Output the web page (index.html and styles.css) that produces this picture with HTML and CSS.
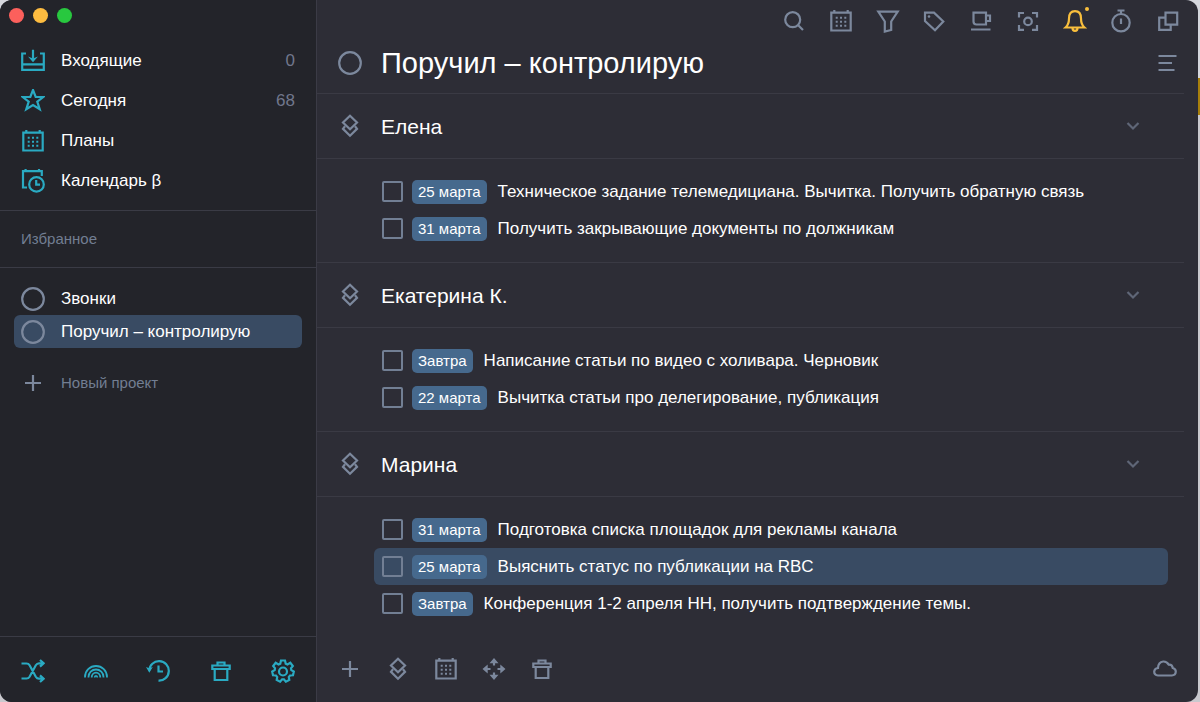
FILE: index.html
```html
<!DOCTYPE html>
<html lang="ru">
<head>
<meta charset="utf-8">
<meta name="viewport" content="width=device-width, initial-scale=1">
<title>Поручил – контролирую</title>
<link rel="stylesheet" href="styles.css">
</head>
<body>
<svg class="sprite" aria-hidden="true">
  <symbol id="inbox" viewBox="0 0 24 24"><path d="M5 4.500H1.200V20.800H22.800V4.500H19M1.200 15.300H22.800M12 0.800V11.500"/><path class="solid" d="M7 7.500L12 9.500L17 7.500L12 13.200Z"/></symbol>
  <symbol id="star" viewBox="0 0 24 24"><path d="M12 1L14.700 8H22.300L16.300 12.700L18.700 20.300L12 16L5.300 20.300L7.700 12.700L1.700 8H9.300Z"/></symbol>
  <symbol id="calendar" viewBox="0 0 24 24"><path d="M2.300 3.700H21.700V21.500H2.300ZM5.300 1V4M18.700 1V4"/><path class="dots" d="M6.700 8.700h2M11 8.700h2M15.300 8.700h2M6.700 12.700h2M11 12.700h2M15.300 12.700h2M6.700 16.700h2M11 16.700h2M15.300 16.700h2"/></symbol>
  <symbol id="calendar-clock" viewBox="0 0 24 24"><path d="M6 18.500H2V2.200H20.800V7M4.600 0V2.500M18 0V2.500"/><circle cx="15.500" cy="15.400" r="7.300"/><path d="M15.200 11V15.700H19"/></symbol>
  <symbol id="circle" viewBox="0 0 24 24"><circle cx="12" cy="12" r="10.800"/></symbol>
  <symbol id="plus" viewBox="0 0 24 24"><path d="M4 12H20M12 4V20"/></symbol>
  <symbol id="shuffle" viewBox="0 0 24 24"><path d="M0.500 4.500H5.500Q7.500 4.500 8.600 6.300L14.800 17.700Q16 19.700 18 19.700H22.500M0.500 19.500H5.500Q7.500 19.500 8.600 17.700L14.800 6.300Q16 4.300 18 4.300H22.500M19 1L22.600 4.300L19 7.600M19 16.400L22.600 19.700L19 23"/></symbol>
  <symbol id="rainbow" viewBox="0 0 24 24"><path class="thin" d="M1 18.500V18A11 11 0 0 1 23 18V18.500M4.500 18.500V18A7.500 7.500 0 0 1 19.500 18V18.500M7.700 18.500A4.300 4.800 0 0 1 16.300 18.500M10.700 18.500A1.300 1.600 0 0 1 13.300 18.500"/></symbol>
  <symbol id="history" viewBox="0 0 24 24"><path d="M3.200 11.500A9.800 9.800 0 1 1 12.500 21.700M12.500 6.500V12.500H17"/><path class="solid" d="M0 8L3.200 9.200L6.800 8L3.300 13.800Z"/></symbol>
  <symbol id="trash" viewBox="0 0 24 24"><path d="M3.300 6.500H20.700V10H3.300ZM5.700 10V21H18.300V10M8.500 6.500V3.500H15.500V6.500"/></symbol>
  <symbol id="gear" viewBox="0 0 24 24"><path d="M10 1.500H14L14.700 4.600L16.500 5.400L19.300 3.800L21.800 7L20 9.200L20.300 11L22.800 12.500L22 16.300L19 16.500L17.800 18L18.300 21L14.900 22.700L12.900 20.300H11.100L9.100 22.700L5.700 21L6.200 18L5 16.500L2 16.300L1.200 12.500L3.700 11L4 9.200L2.200 7L4.700 3.800L7.500 5.400L9.300 4.600Z"/><circle cx="12" cy="12.500" r="4"/></symbol>
  <symbol id="search" viewBox="0 0 24 24"><circle cx="10.700" cy="10.700" r="7.500"/><path d="M16 16L21 21"/></symbol>
  <symbol id="filter" viewBox="0 0 24 24"><path d="M2.300 2.700H21.700L15.200 12.500V21L8.800 22.500V12.500Z"/></symbol>
  <symbol id="tag" viewBox="0 0 24 24"><path d="M3 3.700H12L21.300 12.500L13 21.200L3 12Z"/><circle class="solid" cx="7" cy="7.500" r="1.300"/></symbol>
  <symbol id="cup" viewBox="0 0 24 24"><path d="M4.500 3.700H17V15.500H7.500Q4.500 15.500 4.500 12.500ZM17 6.500H21V12H17M2 20.500H21.500"/></symbol>
  <symbol id="focus" viewBox="0 0 24 24"><path d="M3 8.500V4H8M16 4H21V8.500M21 16V20.800H16M8 20.800H3V16"/><circle cx="12" cy="12.400" r="3.800"/></symbol>
  <symbol id="bell" viewBox="0 0 24 24"><path d="M2.500 18.500Q6 15.500 6 9.500Q6 2.200 12 2.200T18 9.500Q18 15.500 21.500 18.500ZM9.500 19Q9.500 21.900 12 21.900T14.500 19"/></symbol>
  <symbol id="timer" viewBox="0 0 24 24"><circle cx="12" cy="13.700" r="8.700"/><path d="M8.500 1.500H15.500M12 1.500V5M12 9.500V15"/></symbol>
  <symbol id="windows" viewBox="0 0 24 24"><path d="M9.500 3.700H21.200V15.700H9.500ZM9.500 8.700H3.200V20.800H14.700V15.700"/></symbol>
  <symbol id="lines" viewBox="0 0 24 24"><path d="M3.500 5H21.500M3.500 12H17M3.500 19H19.500"/></symbol>
  <symbol id="layers" viewBox="0 0 24 24"><path d="M12 1.800L19 8.500L12 15.200L5 8.500ZM7 12.300L5 14.800L12 21.700L19 14.800L17 12.300"/></symbol>
  <symbol id="chevron" viewBox="0 0 24 24"><path d="M6.500 9L12 14.500L17.500 9"/></symbol>
  <symbol id="move" viewBox="0 0 24 24"><path d="M12 3V8.500M12 15.500V21M3 12H8.500M15.500 12H21"/><path class="solid" d="M7.500 6.200L12 1L16.500 6.200ZM7.500 17.800L12 23L16.500 17.800ZM5.700 7.500L0.500 12L5.700 16.500ZM18.300 7.500L23.500 12L18.300 16.500Z"/></symbol>
  <symbol id="cloud" viewBox="0 0 24 24"><path d="M5 18.500Q1.200 18 1.200 14.700Q1.300 11.500 5 11Q5.200 5.200 10.200 4.500Q13.800 4.300 15.700 7.600Q19.200 7.300 19.800 11Q22.800 11.700 22.800 14.800Q22.600 18.300 18.800 18.500Z"/></symbol>
</svg>

<div class="window">
  <aside class="sidebar">
    <div class="traffic">
      <button class="light red" aria-label="Закрыть"></button>
      <button class="light yellow" aria-label="Свернуть"></button>
      <button class="light green" aria-label="Развернуть"></button>
    </div>
    <nav class="nav">
      <a class="nav-item" href="#"><svg class="icon"><use href="#inbox"/></svg><span class="label">Входящие</span><span class="count">0</span></a>
      <a class="nav-item" href="#"><svg class="icon"><use href="#star"/></svg><span class="label">Сегодня</span><span class="count">68</span></a>
      <a class="nav-item" href="#"><svg class="icon"><use href="#calendar"/></svg><span class="label">Планы</span></a>
      <a class="nav-item" href="#"><svg class="icon"><use href="#calendar-clock"/></svg><span class="label">Календарь β</span></a>
    </nav>
    <h2 class="favorites">Избранное</h2>
    <nav class="projects">
      <a class="project" href="#"><svg class="icon"><use href="#circle"/></svg>Звонки</a>
      <a class="project selected" href="#"><svg class="icon"><use href="#circle"/></svg>Поручил – контролирую</a>
      <button class="project new-project"><svg class="icon"><use href="#plus"/></svg>Новый проект</button>
    </nav>
    <footer class="sidebar-footer">
      <button class="icon-button" aria-label="Перемешать"><svg class="icon"><use href="#shuffle"/></svg></button>
      <button class="icon-button" aria-label="Радуга"><svg class="icon"><use href="#rainbow"/></svg></button>
      <button class="icon-button" aria-label="История"><svg class="icon"><use href="#history"/></svg></button>
      <button class="icon-button" aria-label="Корзина"><svg class="icon"><use href="#trash"/></svg></button>
      <button class="icon-button" aria-label="Настройки"><svg class="icon"><use href="#gear"/></svg></button>
    </footer>
  </aside>

  <main class="main">
    <div class="toolbar">
      <button class="icon-button" aria-label="Поиск"><svg class="icon"><use href="#search"/></svg></button>
      <button class="icon-button" aria-label="Календарь"><svg class="icon"><use href="#calendar"/></svg></button>
      <button class="icon-button" aria-label="Фильтр"><svg class="icon"><use href="#filter"/></svg></button>
      <button class="icon-button" aria-label="Метки"><svg class="icon"><use href="#tag"/></svg></button>
      <button class="icon-button" aria-label="Перерыв"><svg class="icon"><use href="#cup"/></svg></button>
      <button class="icon-button" aria-label="Фокус"><svg class="icon"><use href="#focus"/></svg></button>
      <button class="icon-button alert" aria-label="Уведомления"><svg class="icon"><use href="#bell"/></svg></button>
      <button class="icon-button" aria-label="Таймер"><svg class="icon"><use href="#timer"/></svg></button>
      <button class="icon-button" aria-label="Окна"><svg class="icon"><use href="#windows"/></svg></button>
    </div>
    <header class="title-bar">
      <svg class="icon"><use href="#circle"/></svg>
      <h1 class="title">Поручил – контролирую</h1>
      <button class="icon-button" aria-label="Меню"><svg class="icon"><use href="#lines"/></svg></button>
    </header>

    <section class="group">
      <header class="group-header"><svg class="icon"><use href="#layers"/></svg><h2 class="group-title">Елена</h2><button class="icon-button chevron" aria-label="Свернуть раздел"><svg class="icon"><use href="#chevron"/></svg></button></header>
      <ul class="tasks">
        <li><label class="task"><input class="check" type="checkbox"><span class="date">25 марта</span><span class="text">Техническое задание телемедициана. Вычитка. Получить обратную связь</span></label></li>
        <li><label class="task"><input class="check" type="checkbox"><span class="date">31 марта</span><span class="text">Получить закрывающие документы по должникам</span></label></li>
      </ul>
    </section>
    <section class="group">
      <header class="group-header"><svg class="icon"><use href="#layers"/></svg><h2 class="group-title">Екатерина К.</h2><button class="icon-button chevron" aria-label="Свернуть раздел"><svg class="icon"><use href="#chevron"/></svg></button></header>
      <ul class="tasks">
        <li><label class="task"><input class="check" type="checkbox"><span class="date">Завтра</span><span class="text">Написание статьи по видео с холивара. Черновик</span></label></li>
        <li><label class="task"><input class="check" type="checkbox"><span class="date">22 марта</span><span class="text">Вычитка статьи про делегирование, публикация</span></label></li>
      </ul>
    </section>
    <section class="group">
      <header class="group-header"><svg class="icon"><use href="#layers"/></svg><h2 class="group-title">Марина</h2><button class="icon-button chevron" aria-label="Свернуть раздел"><svg class="icon"><use href="#chevron"/></svg></button></header>
      <ul class="tasks">
        <li><label class="task"><input class="check" type="checkbox"><span class="date">31 марта</span><span class="text">Подготовка списка площадок для рекламы канала</span></label></li>
        <li><label class="task selected"><input class="check" type="checkbox"><span class="date">25 марта</span><span class="text">Выяснить статус по публикации на RBC</span></label></li>
        <li><label class="task"><input class="check" type="checkbox"><span class="date">Завтра</span><span class="text">Конференция 1-2 апреля НН, получить подтверждение темы.</span></label></li>
      </ul>
    </section>

    <footer class="actions">
      <button class="icon-button" aria-label="Добавить"><svg class="icon"><use href="#plus"/></svg></button>
      <button class="icon-button" aria-label="Раздел"><svg class="icon"><use href="#layers"/></svg></button>
      <button class="icon-button" aria-label="Дата"><svg class="icon"><use href="#calendar"/></svg></button>
      <button class="icon-button" aria-label="Переместить"><svg class="icon"><use href="#move"/></svg></button>
      <button class="icon-button" aria-label="Удалить"><svg class="icon"><use href="#trash"/></svg></button>
      <button class="icon-button sync" aria-label="Синхронизация"><svg class="icon"><use href="#cloud"/></svg></button>
    </footer>
  </main>
</div>
</body>
</html>
```
FILE: styles.css
```css
* { box-sizing: border-box; }

body {
  margin: 0;
  color: #fff;
  font-family: "Liberation Sans", Arial, sans-serif;
  font-size: 17px;
  background: linear-gradient(#d5d7dd 78px, #a8800c 78px, #a8800c 115px, #c9c9ce 115px);
}

h1, h2, ul { margin: 0; padding: 0; font-weight: normal; }
ul { list-style: none; }
a { color: inherit; text-decoration: none; }
button { padding: 0; border: 0; background: none; color: inherit; font: inherit; }

.sprite { position: absolute; width: 0; height: 0; }

.icon {
  display: block;
  flex: none;
  width: 24px;
  height: 24px;
  fill: none;
  stroke: currentColor;
  stroke-width: 2.2;
}
.dots { stroke-width: 2; }
.thin { stroke-width: 1.8; }
.solid { fill: currentColor; stroke: none; }
.icon-button { flex: none; }

.window {
  display: flex;
  min-height: 100vh;
  margin-right: 2px;
  overflow: hidden;
  border-radius: 12px;
  background: #2d2d36;
}

.sidebar {
  display: flex;
  flex: none;
  flex-direction: column;
  width: 317px;
  border-right: 1px solid #3b3b46;
  background: #23242a;
}

.traffic { display: flex; gap: 9px; padding: 8px 9px 0; height: 41px; }
.light { width: 15px; height: 15px; border-radius: 50%; }
.red { background: #fc605c; }
.yellow { background: #fdbc40; }
.green { background: #28c83f; }

.nav { padding-bottom: 9px; border-bottom: 1px solid #3a3b45; }
.nav-item { display: flex; align-items: center; gap: 16px; height: 40px; padding: 0 21px; }
.nav-item .icon { color: #2aaac2; }
.label { flex: 1; }
.count { color: #71778c; }

.favorites {
  padding: 0 21px;
  border-bottom: 1px solid #3a3b45;
  color: #727e92;
  font-size: 15px;
  line-height: 56px;
}

.projects { display: flex; flex-direction: column; padding: 14px; }
.project { display: flex; align-items: center; gap: 16px; height: 33px; padding: 0 7px; border-radius: 6px; text-align: left; }
.project .icon { color: #7c889d; }
.new-project { margin-top: 18px; color: #727e92; font-size: 15px; }
.selected { background: #394b63; }

.sidebar-footer {
  display: flex;
  justify-content: space-between;
  margin-top: auto;
  padding: 22px 21px 19px;
  border-top: 1px solid #3a3b45;
  color: #2aaac2;
}

.main { display: flex; flex: 1; flex-direction: column; min-width: 0; color: #fff; }
.toolbar { display: flex; align-items: flex-start; justify-content: space-between; margin-left: 465px; padding: 9px 18px 0 0; height: 40px; color: #7c889d; }
.alert { position: relative; color: #f9bf3d; }
.alert::after { content: ""; position: absolute; top: -2px; right: -2px; width: 4px; height: 4px; border-radius: 50%; background: #f9bf3d; }

.title-bar { display: flex; align-items: center; gap: 19px; height: 53px; padding: 0 19px 8px 21px; color: #7c889d; }
.title { flex: 1; padding-top: 2px; color: #fff; font-size: 29px; }

.group-header {
  display: flex;
  align-items: center;
  gap: 19px;
  height: 66px;
  margin-right: 14px;
  padding: 0 39px 0 21px;
  border: solid #3a3a44;
  border-width: 1px 0;
  color: #7c889d;
}
.group-title { flex: 1; padding-top: 2px; color: #fff; font-size: 21px; }
.chevron { color: #5f6677; }

.tasks { padding: 14px 30px 15px 57px; }
.task { display: flex; align-items: center; height: 37px; padding: 0 8px; border-radius: 6px; }
.check { appearance: none; flex: none; width: 21px; height: 21px; margin: 0 9px 0 0; border: 2px solid #727f94; border-radius: 2px; }
.date { flex: none; height: 24px; padding: 0 6px; border-radius: 5px; background: #46698d; font-size: 15px; line-height: 24px; }
.text { margin-left: 11px; }

.actions { display: flex; gap: 24px; margin-top: auto; padding: 0 21px 21px; color: #7c889d; }
.sync { margin-left: auto; }
```
